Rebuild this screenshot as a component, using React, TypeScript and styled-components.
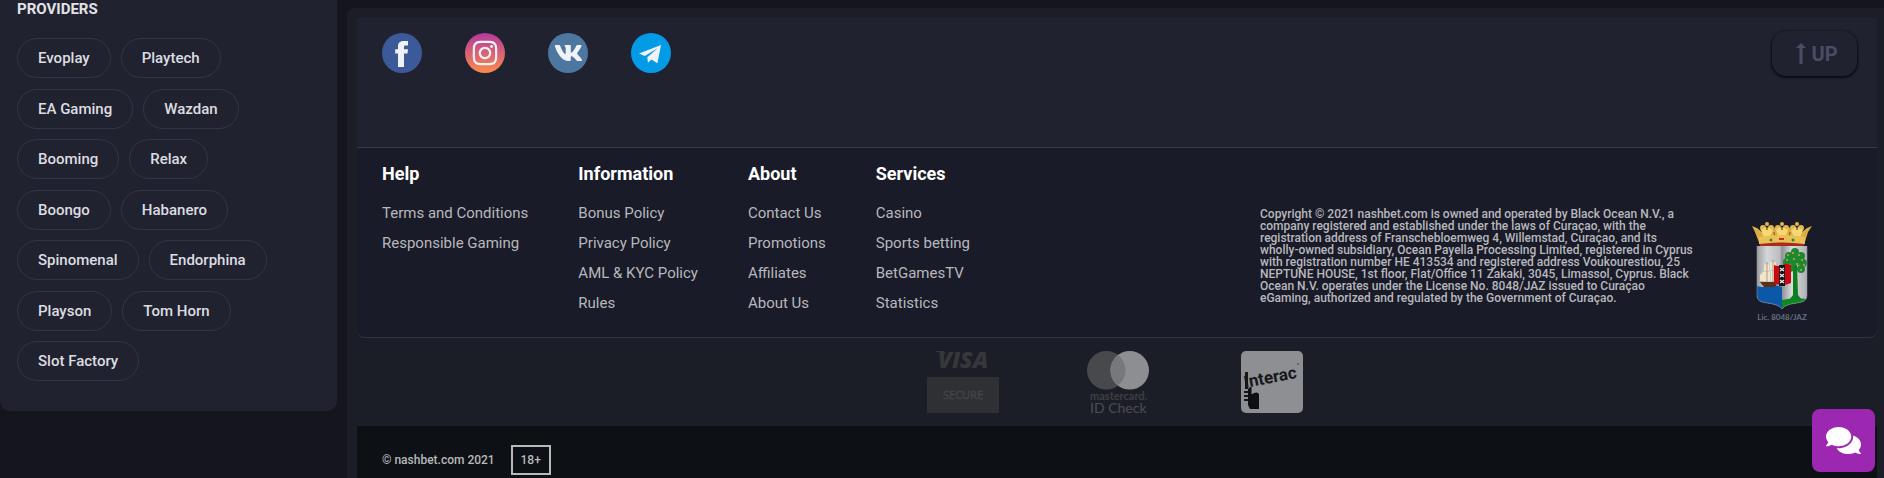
import React from "react";
import styled, { createGlobalStyle } from "styled-components";
import { FaInstagram, FaComments } from "react-icons/fa";

const font = `Roboto, "Liberation Sans", sans-serif`;

const GlobalStyle = createGlobalStyle`
  * { box-sizing: border-box; }
  html { background: #15151e; }
  body { margin: 0; font-family: ${font}; color: #b7b8bd; }
  h2, h3, p, ul { margin: 0; padding: 0; }
  ul { list-style: none; }
  a { color: inherit; text-decoration: none; }
  button { font-family: inherit; cursor: pointer; }
  svg { display: block; overflow: visible; }
`;

const Page = styled.div`
  display: flex;
  align-items: stretch;
  gap: 10px;
  min-height: 100vh;
`;

const Sidebar = styled.aside`
  flex: 0 0 337px;
  align-self: flex-start;
  padding: 0 17px 30px;
  background: #212230;
  border-radius: 0 0 10px 10px;
`;

const SidebarTitle = styled.h2`
  font-size: 15px;
  line-height: 18px;
  font-weight: 700;
  color: #e2e2e6;
`;

const ChipList = styled.ul`
  display: flex;
  flex-wrap: wrap;
  align-content: space-between;
  min-height: 343px;
  margin-top: 20px;
`;

const ChipRow = styled.li`
  display: flex;
  gap: 10px;
  width: 100%;
`;

const Chip = styled.button`
  height: 40px;
  padding: 0 20px;
  border: 1px solid #333448;
  border-radius: 20px;
  background: transparent;
  color: #dcdde1;
  font-size: 15px;
  font-weight: 500;
`;

const Main = styled.main`
  flex: 1;
  min-width: 0;
  display: flex;
  flex-direction: column;
  margin-top: 8px;
  padding: 10px 7px 0 10px;
  background: #1c1e27;
  border-radius: 8px 0 0 0;
`;

const SocialBar = styled.section`
  display: flex;
  justify-content: space-between;
  align-items: flex-start;
  min-height: 130px;
  padding: 12px 20px 0 25px;
  background: #212230;
  border-bottom: 1px solid #383948;
`;

const SocialLinks = styled.nav`
  display: flex;
  gap: 43px;
  padding-top: 3px;
`;

const SocialLink = styled.a<{ $bg: string }>`
  display: flex;
  align-items: center;
  justify-content: center;
  width: 40px;
  height: 40px;
  border-radius: 50%;
  background: ${(p) => p.$bg};
  color: #f1f2f5;
`;

const UpButton = styled.button`
  display: flex;
  align-items: center;
  justify-content: center;
  gap: 5px;
  width: 85px;
  height: 45px;
  margin-top: 1px;
  padding: 0 0 0 5px;
  border: 0;
  border-radius: 14px;
  background: #212230;
  box-shadow: 0 1px 2px 1px #0b0b12;
  color: #4b4c66;
  font-size: 20px;
  font-weight: 700;
`;

const LinksPanel = styled.section`
  display: flex;
  justify-content: space-between;
  min-height: 190px;
  padding: 16px 65px 14px 25px;
  background: #1a1b28;
  border-bottom: 1px solid #333442;
  border-radius: 0 0 8px 8px;
`;

const Columns = styled.div`
  display: flex;
  gap: 50px;
`;

const ColumnTitle = styled.h3`
  margin-bottom: 19px;
  font-size: 18px;
  line-height: 20px;
  font-weight: 700;
  color: #ffffff;
`;

const LinkList = styled.ul`
  display: grid;
  row-gap: 10px;
  font-size: 15px;
  line-height: 20px;
  white-space: nowrap;
`;

const Legal = styled.div`
  display: flex;
  align-items: flex-start;
`;

const LegalText = styled.p`
  width: 492px;
  padding-top: 44px;
  font-size: 12px;
  line-height: 12px;
  font-weight: 500;
  white-space: pre-line;
`;

const License = styled.a`
  padding-top: 58px;
`;

const Payments = styled.section`
  display: flex;
  justify-content: center;
  gap: 88px;
  padding: 13px 5px 13px 0;
`;

const BottomBar = styled.footer`
  flex: 1;
  display: flex;
  align-items: flex-start;
  gap: 16px;
  padding: 19px 25px 0;
  background: #0d1014;
  font-size: 12px;
  line-height: 30px;
  font-weight: 500;
`;

const AgeBadge = styled.span`
  width: 40px;
  height: 30px;
  border: 2px solid #b9b9bc;
  text-align: center;
  line-height: 26px;
`;

const ChatButton = styled.button`
  position: fixed;
  right: 9px;
  bottom: 6px;
  display: flex;
  align-items: center;
  justify-content: center;
  width: 63px;
  height: 63px;
  border: 0;
  border-radius: 8px;
  background: #9c27b0;
  color: #ffffff;
`;

const FacebookMark = () => (
  <svg width="40" height="40" fill="currentColor" aria-hidden="true">
    <path d="M16 34V20.6h-2.8v-4.4H16v-2.8C16 9.8 18.3 8 22 8h4v4.4h-2.5c-1.3 0-1.5.6-1.5 1.6v2.2h4l-.5 4.4H22V34z" />
  </svg>
);

const VkMark = () => (
  <svg width="29" height="26" viewBox="0 0 576 512" fill="currentColor" aria-hidden="true">
    <path d="M545 117.7c3.7-12.5 0-21.7-17.8-21.7h-58.9c-15 0-21.9 7.9-25.6 16.7 0 0-30 73.1-72.4 120.5-13.7 13.7-20 18.1-27.5 18.1-3.7 0-9.4-4.4-9.4-16.9V117.7c0-15-4.2-21.7-16.6-21.7h-92.6c-9.4 0-15 7-15 13.5 0 14.2 21.2 17.5 23.4 57.5v86.8c0 19-3.4 22.5-10.9 22.5-20 0-68.6-73.4-97.4-157.4-5.8-16.3-11.5-22.9-26.6-22.9H38.8c-16.8 0-20.2 7.9-20.2 16.7 0 15.6 20 93.1 93.1 195.5C160.4 378.1 229 416 291.4 416c37.5 0 42.1-8.4 42.1-22.9 0-66.8-3.4-73.1 15.4-73.1 8.7 0 23.7 4.4 58.7 38.1 40 40 46.6 57.9 69 57.9h58.9c16.8 0 25.3-8.4 20.4-25-11.2-34.9-86.9-106.7-90.3-111.5-8.7-11.2-6.2-16.2 0-26.2.1-.1 72-101.3 79.4-135.6z" />
  </svg>
);

const TelegramMark = () => (
  <svg width="40" height="40" fill="currentColor" aria-hidden="true">
    <path d="M8 20.5 30 12l-3.6 18.3-6-3.9L17 29.7l-.7-5.5L27 15l-13.2 8z" />
  </svg>
);

const ArrowUp = () => (
  <svg width="10" height="21" fill="currentColor" aria-hidden="true">
    <path d="M5 0l5 5H6.500v16h-3V5H0z" />
  </svg>
);

const crownArches = [15, 30, 45];
const fruits = [[36, 33], [41, 31], [47, 33], [35, 38], [42, 37], [50, 38], [38, 43], [45, 42], [52, 43], [37, 49], [49, 48]];
const foliage = [[37, 34, 4], [43, 30, 4], [49, 34, 4], [35, 40, 4], [51, 41, 4], [43, 38, 6], [38, 46, 4], [49, 47, 4]];

const Crest = () => (
  <svg width="60" height="100" role="img" aria-label="Curaçao eGaming license">
    <defs>
      <clipPath id="shield">
        <path d="M5 24h50v49c0 6-4 7-10 8-7 1-12 2-15 6-3-4-8-5-15-6-6-1-10-2-10-8z" />
      </clipPath>
      <linearGradient id="steel">
        <stop offset="0" stopColor="#9d9ea2" />
        <stop offset=".2" stopColor="#d5d6d9" />
        <stop offset=".45" stopColor="#bcbdc0" />
        <stop offset=".5" stopColor="#909195" />
        <stop offset=".7" stopColor="#dcdddf" />
        <stop offset="1" stopColor="#aeafb3" />
      </linearGradient>
    </defs>
    <path d="M0 4l5 2 6 5h8l4-6 3 5h8l3-5 4 6h8l6-5 5-2-4 6-4 13H8L3 10z" fill="#dcae45" />
    {crownArches.map((x) => (
      <g key={x}>
        <circle cx={x} cy="2" r="2" fill="#e3b74d" />
        <circle cx={x - 4} cy="6" r="3" fill="#e3b74d" />
        <circle cx={x + 4} cy="6" r="3" fill="#e3b74d" />
        <path d={`M${x - 6} 8q6-5 12 0l-3 8h-6z`} fill="#f5d774" />
        <circle cx={x} cy="7" r="1" fill="#8a5a1c" />
      </g>
    ))}
    <path d="M22 10l1 6M38 10l-1 6" stroke="#8a5a1c" />
    <path d="M7 15q23-4 46 0v7q-23-3-46 0z" fill="#ebc055" />
    <path d="M8 22q22-3 44 0v2H8z" fill="#a72b1f" />
    <rect x="27" y="16" width="5" height="2" fill="#c9301f" />
    <circle cx="19" cy="18" r="1.500" fill="#2b8b38" />
    <circle cx="41" cy="18" r="1.500" fill="#2b8b38" />
    <g clipPath="url(#shield)">
      <path d="M5 24h50v64H5z" fill="url(#steel)" />
      <path d="M5 64q6 2 12 0t13 1v24H5z" fill="#0b57a8" />
      <path d="M30 78q12-3 25-1v12H30z" fill="#0a8a20" />
      <path d="M41 42h4l1 31 4 5H37l4-5z" fill="#0c7f20" />
      {foliage.map(([x, y, r]) => (
        <circle key={`${x}-${y}`} cx={x} cy={y} r={r} fill="#1b8a2c" />
      ))}
      {fruits.map(([x, y]) => (
        <circle key={`${x}-${y}`} cx={x} cy={y} r="1" fill="#e4926a" />
      ))}
      <path d="M8 60h18l-3 5H12z" fill="#5a3118" />
      <path d="M8 53l4-4v10H8zM12 43q4-2 5 0v6h-5zM12 50h6v9h-6zM18 40q5-1 6 1v7h-6zM19 49h5v10h-5z" fill="#efe6c8" />
      <path d="M15 40v20M21 38v22" stroke="#8d6a48" strokeWidth=".6" />
    </g>
    <path d="M22 43q4 2 8 0t9 0v18q-4 2-9 2t-8-2z" fill="#cc0712" />
    <path d="M27 43h6v21h-6z" fill="#141418" />
    <path d="M28 46l4 3m0-3l-4 3m0 3l4 3m0-3l-4 3m0 3l4 3m0-3l-4 3" stroke="#f0f0f0" strokeWidth="1.200" />
    <path d="M5 24v49c0 6 4 7 10 8 7 1 12 2 15 6 3-4 8-5 15-6 6-1 10-2 10-8V24" fill="none" stroke="#8b8d93" strokeWidth=".6" />
    <text x="30" y="98" textAnchor="middle" fontFamily="Lato, sans-serif" fontSize="8" fontWeight="700" fill="#667084">
      Lic. 8048/JAZ
    </text>
  </svg>
);

const VisaSecure = () => (
  <svg width="72" height="62" role="img" aria-label="Visa Secure">
    <text x="36" y="17" textAnchor="middle" fontFamily="'Open Sans', sans-serif" fontStyle="italic" fontWeight="800" fontSize="23" fill="#36373b">
      VISA
    </text>
    <path d="M9 0h8l2 3q-4-2-10-2z" fill="#36373b" />
    <rect y="26" width="72" height="36" fill="#2f3033" />
    <text x="36" y="48" textAnchor="middle" fontFamily="'Open Sans', sans-serif" fontSize="11" fill="#2a2b2e" stroke="#46474a" strokeWidth=".6">
      SECURE
    </text>
  </svg>
);

const MastercardIdCheck = () => (
  <svg width="66" height="62" role="img" aria-label="Mastercard ID Check">
    <circle cx="19.300" cy="19.300" r="19.300" fill="#48494c" />
    <circle cx="42.700" cy="19.300" r="19.300" fill="#8d8e92" />
    <path d="M31 4a19.300 19.300 0 0 1 0 30.600a19.300 19.300 0 0 1 0-30.600z" fill="#77787c" />
    <text x="3" y="49" fontFamily="Lato, sans-serif" fontSize="11" fontWeight="700" fill="#3d3e43">
      mastercard.
    </text>
    <text x="3" y="62" fontFamily="Lato, sans-serif" fontSize="14" fill="#4b4c51">
      ID Check
    </text>
  </svg>
);

const Interac = () => (
  <svg width="62" height="62" role="img" aria-label="Interac">
    <rect width="62" height="62" rx="5" fill="#8e8f93" />
    <text x="4" y="37" transform="rotate(-11 4 37)" fontFamily={font} fontSize="17" fontWeight="700" fill="#16171b">
      Interac
    </text>
    <path d="M4 21h3v17H4z" fill="#16171b" />
    <path d="M8 37q2-2 3 0v6q5-3 7 0v15H9l-2-4V38z" fill="#0e0f12" />
    <path d="M3 40h4v2H3zM3 44h4v2H3zM3 48h4v2H3z" fill="#16171b" />
    <path d="M11 37v6" stroke="#8e8f93" />
    <circle cx="57" cy="13" r="1" fill="#5b5c60" />
  </svg>
);

const providerRows = [
  ["Evoplay", "Playtech"],
  ["EA Gaming", "Wazdan"],
  ["Booming", "Relax"],
  ["Boongo", "Habanero"],
  ["Spinomenal", "Endorphina"],
  ["Playson", "Tom Horn"],
  ["Slot Factory"],
];

const columns = [
  { title: "Help", links: ["Terms and Conditions", "Responsible Gaming"] },
  { title: "Information", links: ["Bonus Policy", "Privacy Policy", "AML & KYC Policy", "Rules"] },
  { title: "About", links: ["Contact Us", "Promotions", "Affiliates", "About Us"] },
  { title: "Services", links: ["Casino", "Sports betting", "BetGamesTV", "Statistics"] },
];

const socials = [
  { name: "Facebook", bg: "#3c5a99", icon: <FacebookMark /> },
  { name: "Instagram", bg: "linear-gradient(#b33a9e, #fd8a4b)", icon: <FaInstagram size={28} /> },
  { name: "VK", bg: "#4d76a1", icon: <VkMark /> },
  { name: "Telegram", bg: "#039be5", icon: <TelegramMark /> },
];

const legalLines = [
  "Copyright © 2021 nashbet.com is owned and operated by Black Ocean N.V., a",
  "company registered and established under the laws of Curaçao, with the",
  "registration address of Franschebloemweg 4, Willemstad, Curaçao, and its",
  "wholly-owned subsidiary, Ocean Payella Processing Limited, registered in Cyprus",
  "with registration number HE 413534 and registered address Voukourestiou, 25",
  "NEPTUNE HOUSE, 1st floor, Flat/Office 11 Zakaki, 3045, Limassol, Cyprus. Black",
  "Ocean N.V. operates under the License No. 8048/JAZ issued to Curaçao",
  "eGaming, authorized and regulated by the Government of Curaçao.",
];

export default function App() {
  return (
    <>
      <GlobalStyle />
      <Page>
        <Sidebar>
          <SidebarTitle>PROVIDERS</SidebarTitle>
          <ChipList>
            {providerRows.map((row) => (
              <ChipRow key={row[0]}>
                {row.map((name) => (
                  <Chip key={name}>{name}</Chip>
                ))}
              </ChipRow>
            ))}
          </ChipList>
        </Sidebar>
        <Main>
          <SocialBar>
            <SocialLinks>
              {socials.map((s) => (
                <SocialLink key={s.name} href="#" aria-label={s.name} $bg={s.bg}>
                  {s.icon}
                </SocialLink>
              ))}
            </SocialLinks>
            <UpButton>
              <ArrowUp />
              UP
            </UpButton>
          </SocialBar>
          <LinksPanel>
            <Columns>
              {columns.map((c) => (
                <div key={c.title}>
                  <ColumnTitle>{c.title}</ColumnTitle>
                  <LinkList>
                    {c.links.map((l) => (
                      <li key={l}>
                        <a href="#">{l}</a>
                      </li>
                    ))}
                  </LinkList>
                </div>
              ))}
            </Columns>
            <Legal>
              <LegalText>{legalLines.join("\n")}</LegalText>
              <License href="#">
                <Crest />
              </License>
            </Legal>
          </LinksPanel>
          <Payments>
            <VisaSecure />
            <MastercardIdCheck />
            <Interac />
          </Payments>
          <BottomBar>
            <span>© nashbet.com 2021</span>
            <AgeBadge>18+</AgeBadge>
          </BottomBar>
        </Main>
      </Page>
      <ChatButton aria-label="Chat">
        <FaComments size={35} />
      </ChatButton>
    </>
  );
}
